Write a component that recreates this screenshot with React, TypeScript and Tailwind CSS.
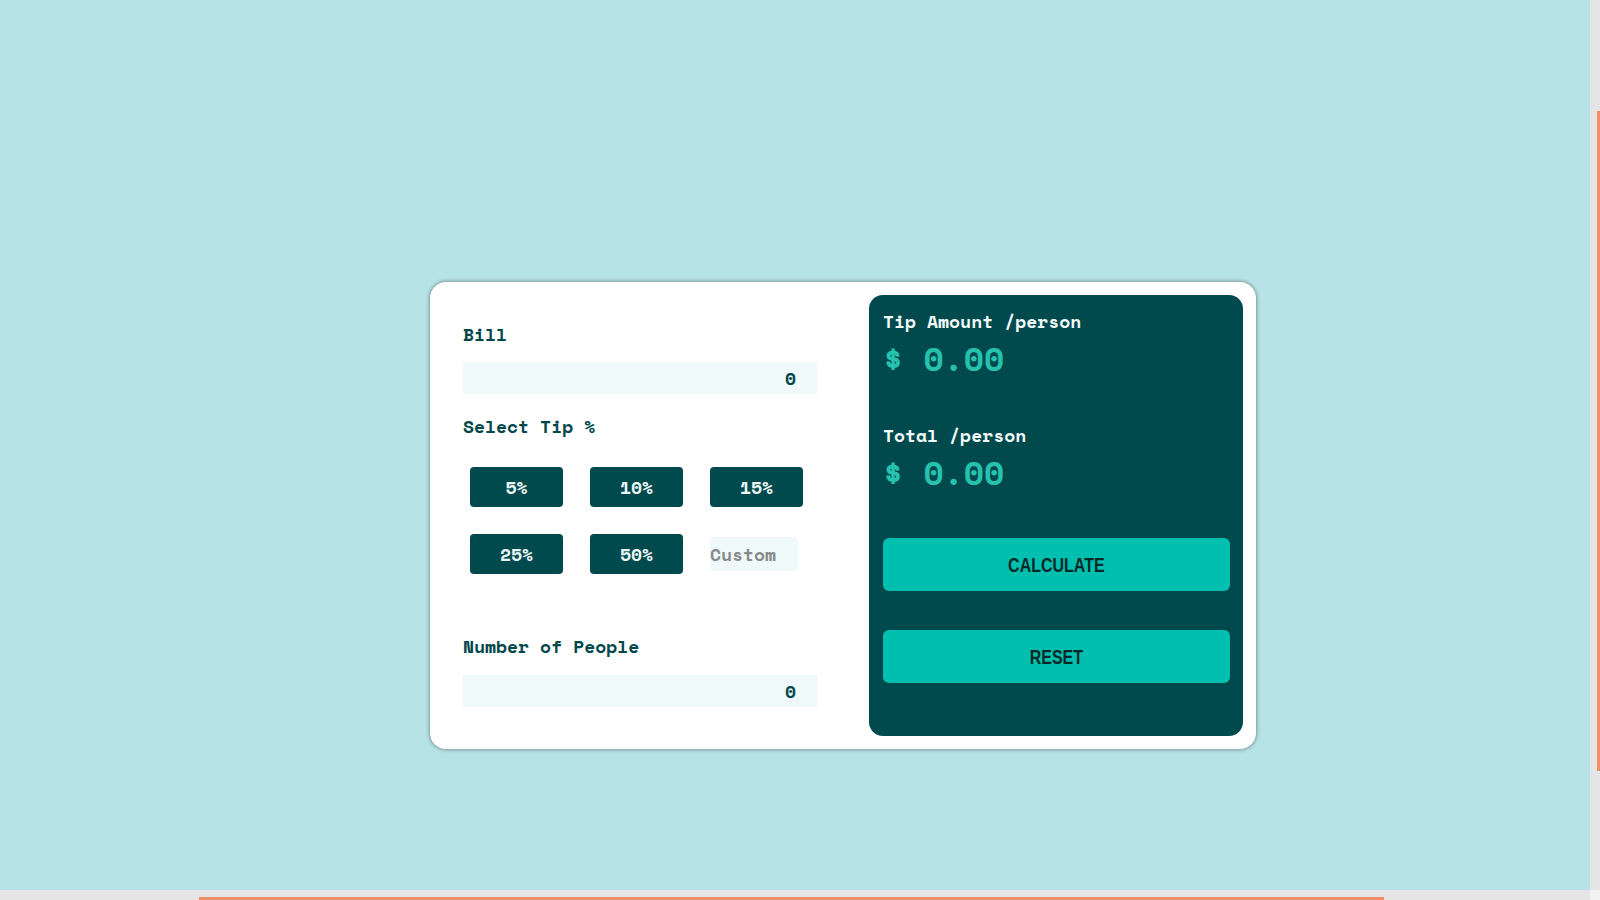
import React from 'react';

const tips = ['5%', '10%', '15%', '25%', '50%'];

function Label({ children, light }: { children: React.ReactNode; light?: boolean }) {
  return (
    <p className={`text-[18px] leading-none font-bold ${light ? 'text-[#f1fbfb]' : 'text-[#00474b]'}`}>
      {children}
    </p>
  );
}

function Amount({ value }: { value: string }) {
  return <p className="text-[33px] leading-none font-bold text-[#26c2ae]">$ {value}</p>;
}

function ActionButton({ children, className = '' }: { children: React.ReactNode; className?: string }) {
  return (
    <button
      type="button"
      className={`h-[53px] w-[347px] rounded-[6px] bg-[#00bfae] font-['Liberation_Sans',sans-serif] text-[20px] font-bold text-[#072826] ${className}`}
    >
      <span className="inline-block scale-x-[0.8]">{children}</span>
    </button>
  );
}

export default function App() {
  const [bill, setBill] = React.useState('0');
  const [people, setPeople] = React.useState('0');
  const [custom, setCustom] = React.useState('');

  return (
    <div className="flex h-screen w-screen flex-col font-['Space_Mono','DejaVu_Sans_Mono',monospace]">
      <div className="flex min-h-0 flex-1">
        <main className="flex-1 bg-[#b8e3e6] pl-[430px] pt-[282px]">
          {/* Tarjeta principal */}
          <div className="flex w-[826px] gap-[52px] rounded-2xl bg-white p-[13px] pl-[33px] shadow-[0_0_4px_rgba(0,0,0,0.5)]">
            {/* Columna izquierda */}
            <div className="flex w-[354px] flex-col pt-[30px]">
              <Label>Bill</Label>
              <input
                value={bill}
                onChange={(e) => setBill(e.target.value)}
                className="mt-[19px] h-[32px] w-full bg-[#f0f9fa] pr-[21px] text-right text-[18px] font-bold text-[#00474b] outline-none"
              />

              <div className="mt-[23px]">
                <Label>Select Tip %</Label>
              </div>

              <div className="mt-[32px] grid grid-cols-[93px_93px_93px] gap-x-[27px] gap-y-[27px] pl-[7px]">
                {tips.map((t) => (
                  <button
                    key={t}
                    type="button"
                    className="h-[40px] rounded-[4px] bg-[#00494d] text-[18px] font-bold text-[#eaf7f7]"
                  >
                    {t}
                  </button>
                ))}
                <div className="flex items-center">
                  <input
                    value={custom}
                    onChange={(e) => setCustom(e.target.value)}
                    placeholder="Custom"
                    className="h-[34px] w-[88px] rounded-[4px] bg-[#f0f9fa] text-[18px] font-bold text-[#00474b] outline-none placeholder:text-[#878b8b]"
                  />
                </div>
              </div>

              <div className="mt-[63px]">
                <Label>Number of People</Label>
              </div>
              <input
                value={people}
                onChange={(e) => setPeople(e.target.value)}
                className="mt-[20px] h-[32px] w-full bg-[#f0f9fa] pr-[21px] text-right text-[18px] font-bold text-[#00474b] outline-none"
              />
            </div>

            {/* Panel de resultados */}
            <div className="flex h-[441px] w-[374px] flex-col rounded-[14px] bg-[#00494d] px-[14px] pt-[17px]">
              <Label light>Tip Amount /person</Label>
              <div className="mt-[12px]">
                <Amount value="0.00" />
              </div>

              <div className="mt-[51px]">
                <Label light>Total /person</Label>
              </div>
              <div className="mt-[12px]">
                <Amount value="0.00" />
              </div>

              <ActionButton className="mt-[49px]">CALCULATE</ActionButton>
              <ActionButton className="mt-[39px]">RESET</ActionButton>
            </div>
          </div>
        </main>

        {/* barra de desplazamiento vertical */}
        <div className="w-[10px] bg-[#e5e5e5] pl-[7px] pt-[111px]">
          <div className="h-[660px] w-[3px] bg-[#ef8f68]" />
        </div>
      </div>

      {/* barra de desplazamiento horizontal */}
      <div className="flex h-[10px]">
        <div className="flex-1 bg-[#e5e5e5] pl-[199px] pt-[7px]">
          <div className="h-[3px] w-[1185px] bg-[#ef8f68]" />
        </div>
        <div className="w-[10px] bg-[#f1f1f1]" />
      </div>
    </div>
  );
}
